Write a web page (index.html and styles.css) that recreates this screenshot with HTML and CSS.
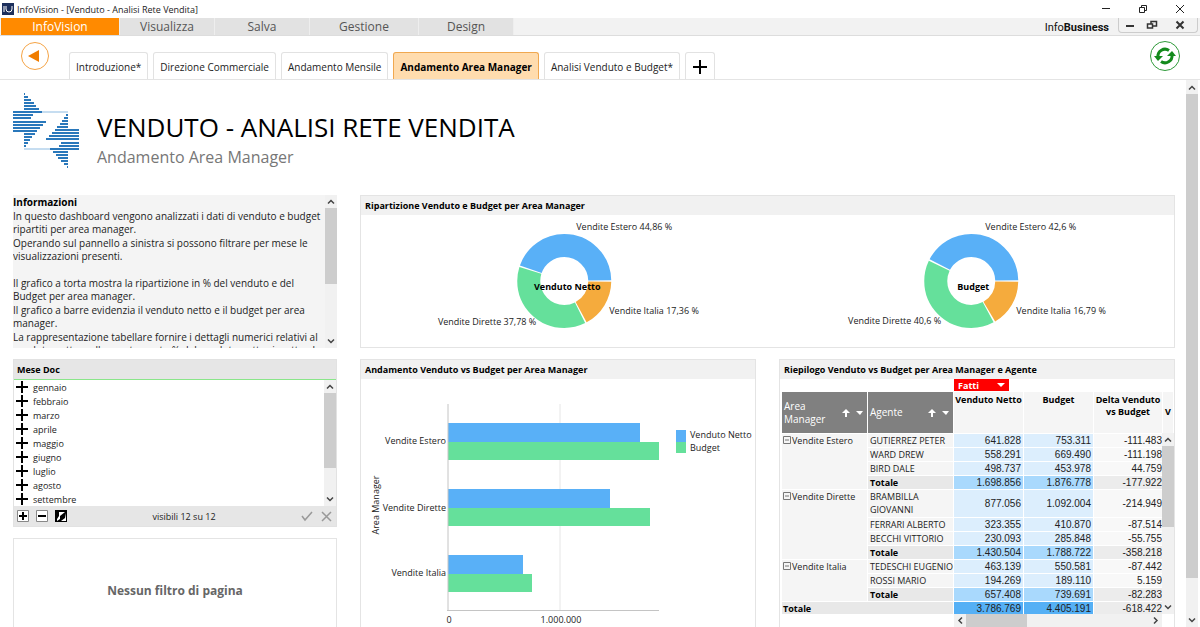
FILE: index.html
```html
<!DOCTYPE html>
<html lang="it">
	<head>
		<meta charset="utf-8" />
		<title>InfoVision - [Venduto - Analisi Rete Vendita]</title>
		<link rel="stylesheet" href="styles.css">
	</head>
	<body>
		<svg width="0" height="0" class="symbols">
			<symbol id="plus" viewBox="0 0 12 12"><path d="M6 0v12M0 6h12" stroke="#000" stroke-width="2" /></symbol>
			<symbol id="up" viewBox="0 0 12 12"><path d="M3 8l3-3 3 3" fill="none" stroke="#444" stroke-width="1.500" /></symbol>
			<symbol id="down" viewBox="0 0 12 12"><path d="M3 4l3 3 3-3" fill="none" stroke="#444" stroke-width="1.500" /></symbol>
			<symbol id="left" viewBox="0 0 12 12"><path d="M8 3L5 6l3 3" fill="none" stroke="#444" stroke-width="1.500" /></symbol>
			<symbol id="right" viewBox="0 0 12 12"><path d="M4 3l3 3-3 3" fill="none" stroke="#444" stroke-width="1.500" /></symbol>
			<symbol id="sort" viewBox="0 0 24 10"><path d="M5 1l4 4H6v4H4V5H1z" fill="#fff" /><path d="M15 3h7l-3 4z" fill="#fff" /></symbol>
			<symbol id="minus-box" viewBox="0 0 8 8"><path d="M.5.5h7v7h-7zM2 4h4" fill="none" stroke="#777" /></symbol>
		</svg>

		<header class="titlebar">
			<svg class="app-icon" viewBox="0 0 12 12"><path d="M0 0h12v12H0z" fill="#1c2f5c" /><path d="M2 3v6M4 3v3q0 3 3 3 3 0 3-3V3" fill="none" stroke="#fff" /></svg>
			<span class="window-title">InfoVision - [Venduto - Analisi Rete Vendita]</span>
			<div class="window-controls">
				<button aria-label="Riduci"><svg viewBox="0 0 10 10"><path d="M1 4.5h8" stroke="#222" /></svg></button>
				<button aria-label="Ripristina"><svg viewBox="0 0 10 10"><path d="M1.500 3.500h5v5h-5zM3.500 3V1.500h5v5H7" fill="none" stroke="#222" /></svg></button>
				<button aria-label="Chiudi"><svg viewBox="0 0 10 10"><path d="M1 1l8 8M9 1L1 9" stroke="#222" /></svg></button>
			</div>
		</header>

		<nav class="menu">
			<button class="menu-item active">InfoVision</button>
			<button class="menu-item">Visualizza</button>
			<button class="menu-item">Salva</button>
			<button class="menu-item wide">Gestione</button>
			<button class="menu-item">Design</button>
			<span class="brand">Info<b>Business</b></span>
			<div class="mdi-controls">
				<button aria-label="Riduci scheda"><svg viewBox="0 0 12 10"><path d="M2 6h8" stroke="#333" stroke-width="2" /></svg></button>
				<button aria-label="Ripristina scheda"><svg viewBox="0 0 12 10"><path d="M1.500 4h5v4h-5zM5 4V1.500h5.500V6H7" fill="none" stroke="#333" stroke-width="1.500" /></svg></button>
				<button aria-label="Chiudi scheda"><svg viewBox="0 0 12 10"><path d="M2.500 1.500l7 7M9.500 1.500l-7 7" stroke="#333" stroke-width="2" /></svg></button>
			</div>
		</nav>

		<div class="tabbar">
			<button class="round-button" aria-label="Indietro">
				<svg viewBox="0 0 30 30"><circle cx="15" cy="15" r="13.500" fill="none" stroke="#f5a344" /><path d="M19 9v12L8 15z" fill="#f07d00" /></svg>
			</button>
			<nav class="tabs">
				<button class="tab">Introduzione*</button>
				<button class="tab">Direzione Commerciale</button>
				<button class="tab">Andamento Mensile</button>
				<button class="tab active">Andamento Area Manager</button>
				<button class="tab">Analisi Venduto e Budget*</button>
				<button class="tab add" aria-label="Aggiungi"><svg viewBox="0 0 16 16"><path d="M8 1v14M1 8h14" stroke="#000" stroke-width="2" /></svg></button>
			</nav>
			<button class="round-button" aria-label="Aggiorna">
				<svg viewBox="0 0 30 30">
					<circle cx="15" cy="15" r="14.500" fill="none" stroke="#2f9a3a" />
					<g id="half-arrow"><path d="M8 16a7 7 0 0 1 11-6.500" fill="none" stroke="#138a1c" stroke-width="3" /><path d="M4 15h9l-5 5z" fill="#138a1c" /></g>
					<use href="#half-arrow" transform="rotate(180 15 15)" />
				</svg>
			</button>
		</div>

		<div class="workspace">
			<main class="page">
				<div class="page-header">
					<svg class="logo" viewBox="0 0 66 76">
						<g id="stripes" fill="none">
							<path d="M11 1h1M11 4h4M11 7h7M11 10h10M11 13h12M11 16h15M0 19h29M0 22h20M0 25h18M0 29h33M0 32h30M0 35h27M0 38h24M11 41h11M11 44h8M11 47h6M11 50h4M11 53h2" stroke="#2a78bb" stroke-width="2" />
							<path d="M29 19h26" stroke="#8dbbe2" />
						</g>
						<use href="#stripes" transform="rotate(180 33 37.500)" />
					</svg>
					<div>
						<h1>VENDUTO - ANALISI RETE VENDITA</h1>
						<h2>Andamento Area Manager</h2>
					</div>
				</div>

				<div class="dashboard">
					<section class="info">
						<div class="info-text">
							<p><b>Informazioni</b></p>
							<p>
								In questo dashboard vengono analizzati i dati di venduto e budget<br />
								ripartiti per area manager.
							</p>
							<p>
								Operando sul pannello a sinistra si possono filtrare per mese le<br />
								visualizzazioni presenti.
							</p>
							<br />
							<p>
								Il grafico a torta mostra la ripartizione in % del venduto e del<br />
								Budget per area manager.
							</p>
							<p>
								Il grafico a barre evidenzia il venduto netto e il budget per area<br />
								manager.
							</p>
							<p>
								La rappresentazione tabellare fornire i dettagli numerici relativi al<br />
								venduto netto e allo scostamento % del venduto netto rispetto al
							</p>
						</div>
						<div class="scrollbar">
							<svg><use href="#up" /></svg>
							<div class="track"><div class="thumb long"></div></div>
							<svg><use href="#down" /></svg>
						</div>
					</section>

					<section class="panel donuts">
						<h3>Ripartizione Venduto e Budget per Area Manager</h3>
						<div class="donut-row">
							<svg viewBox="0 0 406 132">
								<g class="ring" transform="translate(203 66)">
									<circle r="35.500" pathLength="100" stroke="#f5ab3d" stroke-dasharray="16.800 100" stroke-dashoffset="-.3" />
									<circle r="35.500" pathLength="100" stroke="#65e09b" stroke-dasharray="37.200 100" stroke-dashoffset="-17.650" />
									<circle r="35.500" pathLength="100" stroke="#59b0f7" stroke-dasharray="44.300 100" stroke-dashoffset="-55.400" />
								</g>
								<text x="215" y="15">Vendite Estero 44,86 %</text>
								<text x="248" y="99">Vendite Italia 17,36 %</text>
								<text x="175" y="110" class="end">Vendite Dirette 37,78 %</text>
								<text x="206" y="75" class="hub">Venduto Netto</text>
							</svg>
							<svg viewBox="0 0 406 132">
								<g class="ring" transform="translate(203 66)">
									<circle r="35.500" pathLength="100" stroke="#f5ab3d" stroke-dasharray="16.200 100" stroke-dashoffset="-.3" />
									<circle r="35.500" pathLength="100" stroke="#65e09b" stroke-dasharray="40 100" stroke-dashoffset="-17.100" />
									<circle r="35.500" pathLength="100" stroke="#59b0f7" stroke-dasharray="42 100" stroke-dashoffset="-57.700" />
								</g>
								<text x="217" y="15">Vendite Estero 42,6 %</text>
								<text x="248" y="99">Vendite Italia 16,79 %</text>
								<text x="173" y="109" class="end">Vendite Dirette 40,6 %</text>
								<text x="205" y="75" class="hub">Budget</text>
							</svg>
						</div>
					</section>

					<div class="side">
						<section class="filter">
							<h3>Mese Doc</h3>
							<div class="filter-body">
								<ul class="months">
									<li><svg><use href="#plus" /></svg>gennaio</li>
									<li><svg><use href="#plus" /></svg>febbraio</li>
									<li><svg><use href="#plus" /></svg>marzo</li>
									<li><svg><use href="#plus" /></svg>aprile</li>
									<li><svg><use href="#plus" /></svg>maggio</li>
									<li><svg><use href="#plus" /></svg>giugno</li>
									<li><svg><use href="#plus" /></svg>luglio</li>
									<li><svg><use href="#plus" /></svg>agosto</li>
									<li><svg><use href="#plus" /></svg>settembre</li>
								</ul>
								<div class="scrollbar">
									<svg><use href="#up" /></svg>
									<div class="track"><div class="thumb wide"></div></div>
									<svg><use href="#down" /></svg>
								</div>
							</div>
							<div class="filter-footer">
								<div class="tools">
									<button aria-label="Seleziona tutto"><svg viewBox="0 0 12 12"><path d="M.5.5h11v11H.5z" fill="#fff" stroke="#888" /><path d="M6 2v8M2 6h8" stroke="#000" stroke-width="2" /></svg></button>
									<button aria-label="Deseleziona tutto"><svg viewBox="0 0 12 12"><path d="M.5.5h11v11H.5z" fill="#fff" stroke="#888" /><path d="M2 6h8" stroke="#000" stroke-width="2" /></svg></button>
									<button aria-label="Inverti"><svg viewBox="0 0 12 12"><path d="M0 0h12v12H0z" /><path d="M4 2h6L5 6v3L2 11V9l2-3zM11 3v8H6l4-3z" fill="#fff" /></svg></button>
								</div>
								<span>visibili 12 su 12</span>
								<div class="tools">
									<button aria-label="Applica"><svg viewBox="0 0 12 12"><path d="M1 6l3 4 7-8" fill="none" stroke="#999" stroke-width="1.500" /></svg></button>
									<button aria-label="Annulla"><svg viewBox="0 0 12 12"><path d="M2 2l9 9M11 2l-9 9" stroke="#999" stroke-width="1.500" /></svg></button>
								</div>
							</div>
						</section>
						<section class="page-filter">Nessun filtro di pagina</section>
					</div>

					<section class="panel">
						<h3>Andamento Venduto vs Budget per Area Manager</h3>
						<svg class="bars" viewBox="0 0 394 248">
							<path d="M199 25v206" stroke="#e6e6e6" />
							<g fill="#59b0f7">
								<rect x="87" y="44" width="192" height="19" />
								<rect x="87" y="110" width="162" height="19" />
								<rect x="87" y="176" width="75" height="19" />
								<rect x="315" y="51" width="10" height="12" />
							</g>
							<g fill="#65e09b">
								<rect x="87" y="63" width="211" height="18" />
								<rect x="87" y="129" width="202" height="18" />
								<rect x="87" y="195" width="84" height="18" />
								<rect x="315" y="63" width="10" height="11" />
							</g>
							<path d="M87 25v207M86 231.500h212" fill="none" stroke="#c4c4c4" />
							<text x="85" y="65" class="end">Vendite Estero</text>
							<text x="85" y="132" class="end">Vendite Dirette</text>
							<text x="85" y="197" class="end">Vendite Italia</text>
							<text x="329" y="59">Venduto Netto</text>
							<text x="329" y="72">Budget</text>
							<text x="88" y="244" class="mid">0</text>
							<text x="200" y="244" class="mid">1.000.000</text>
							<text transform="translate(18 126) rotate(-90)" class="mid">Area Manager</text>
						</svg>
					</section>

					<section class="panel pivot">
						<h3>Riepilogo Venduto vs Budget per Area Manager e Agente</h3>
						<div class="facts">
							<select aria-label="Fatti"><option>Fatti</option></select>
							<svg viewBox="0 0 8 5"><path d="M0 0h8L4 4z" fill="#fff" /></svg>
						</div>
						<div class="pivot-view">
							<table>
								<colgroup>
									<col class="c-area"><col class="c-agent"><col class="c-net"><col class="c-budget"><col class="c-delta"><col>
								</colgroup>
								<thead>
									<tr>
										<th class="dim"><span>Area Manager<svg><use href="#sort" /></svg></span></th>
										<th class="dim"><span>Agente<svg><use href="#sort" /></svg></span></th>
										<th>Venduto Netto</th>
										<th>Budget</th>
										<th>Delta Venduto<br />vs Budget</th>
										<th><br />V</th>
									</tr>
								</thead>
								<tbody>
									<tr><th rowspan="4"><svg><use href="#minus-box" /></svg>Vendite Estero</th><td>GUTIERREZ PETER</td><td>641.828</td><td>753.311</td><td>-111.483</td><td></td></tr>
									<tr><td>WARD DREW</td><td>558.291</td><td>669.490</td><td>-111.198</td><td></td></tr>
									<tr><td>BIRD DALE</td><td>498.737</td><td>453.978</td><td>44.759</td><td></td></tr>
									<tr class="total"><td>Totale</td><td>1.698.856</td><td>1.876.778</td><td>-177.922</td><td></td></tr>
									<tr class="double"><th rowspan="4"><svg><use href="#minus-box" /></svg>Vendite Dirette</th><td>BRAMBILLA<br />GIOVANNI</td><td>877.056</td><td>1.092.004</td><td>-214.949</td><td></td></tr>
									<tr><td>FERRARI ALBERTO</td><td>323.355</td><td>410.870</td><td>-87.514</td><td></td></tr>
									<tr><td>BECCHI VITTORIO</td><td>230.093</td><td>285.848</td><td>-55.755</td><td></td></tr>
									<tr class="total"><td>Totale</td><td>1.430.504</td><td>1.788.722</td><td>-358.218</td><td></td></tr>
									<tr><th rowspan="3"><svg><use href="#minus-box" /></svg>Vendite Italia</th><td>TEDESCHI EUGENIO</td><td>463.139</td><td>550.581</td><td>-87.442</td><td></td></tr>
									<tr><td>ROSSI MARIO</td><td>194.269</td><td>189.110</td><td>5.159</td><td></td></tr>
									<tr class="total"><td>Totale</td><td>657.408</td><td>739.691</td><td>-82.283</td><td></td></tr>
									<tr class="grand"><th colspan="2">Totale</th><td>3.786.769</td><td>4.405.191</td><td>-618.422</td><td></td></tr>
								</tbody>
							</table>
							<div class="scrollbar over">
								<svg><use href="#up" /></svg>
								<div class="track"><div class="thumb half"></div></div>
								<svg><use href="#down" /></svg>
							</div>
						</div>
						<div class="scrollbar horizontal">
							<svg><use href="#left" /></svg>
							<div class="track"><div class="thumb"></div></div>
							<svg><use href="#right" /></svg>
						</div>
					</section>
				</div>
			</main>
			<div class="scrollbar page-scroll">
				<svg><use href="#up" /></svg>
				<div class="track"><div class="thumb"></div></div>
				<svg><use href="#down" /></svg>
			</div>
		</div>
	</body>
</html>
```
FILE: styles.css
```css
* {
	margin: 0;
	padding: 0;
	box-sizing: border-box;
}

body {
	height: 100vh;
	display: flex;
	flex-direction: column;
	overflow: hidden;
	background: #fff;
	color: #222;
	font-family: "Open Sans", "Noto Sans", sans-serif;
	font-size: 9px;
}

button {
	border: none;
	background: none;
	font: inherit;
	color: inherit;
}

svg {
	display: block;
	flex: none;
}

.symbols {
	position: absolute;
}

/* Window title and menu */
.titlebar {
	display: flex;
	align-items: center;
	height: 18px;
	padding: 0 15px 0 2px;
	gap: 3px;
}

.app-icon {
	width: 12px;
	height: 12px;
}

.window-title {
	flex: 1;
}

.window-controls {
	display: flex;
	gap: 27px;
}

.window-controls svg {
	width: 10px;
	height: 10px;
}

.menu {
	display: flex;
	height: 18px;
	padding-left: 1px;
	background: #f2f2f2;
	border-bottom: 1px solid #ddd;
}

.menu-item {
	width: 95px;
	background: #e2e2e2;
	border-right: 1px solid #eee;
	font-size: 12px;
	line-height: 17px;
	color: #555;
}

.menu-item.wide {
	width: 109px;
}

.menu-item.active {
	width: 119px;
	background: #ff8a00;
	color: #fff;
}

.brand {
	margin-left: auto;
	margin-right: 9px;
	font-family: Roboto, sans-serif;
	font-size: 11px;
	line-height: 19px;
	color: #111;
}

.mdi-controls {
	display: flex;
	align-items: center;
	gap: 10px;
	width: 80px;
	height: 15px;
	margin-right: 2px;
	padding-left: 5px;
	border: 1px solid #ccc;
	border-top: none;
	border-radius: 0 0 4px 4px;
}

.mdi-controls svg {
	width: 12px;
	height: 10px;
}

.mdi-controls button:last-child {
	margin-left: 6px;
}

/* Dashboard tabs */
.tabbar {
	display: flex;
	height: 44px;
	padding: 5px 20px 0;
	border-bottom: 1px solid #e4e4e4;
}

.round-button,
.round-button svg {
	width: 30px;
	height: 30px;
}

.tabs {
	display: flex;
	flex: 1;
	align-items: flex-end;
	gap: 5px;
	padding-left: 19px;
}

.tab {
	height: 27px;
	padding: 1px 6px 0;
	border: 1px solid #e2e2e2;
	border-bottom: none;
	border-radius: 3px 3px 0 0;
	font-size: 10px;
}

.tab.active {
	background: #ffdcae;
	border-color: #f0a850;
	color: #000;
	font-weight: 700;
}

.tab.add svg {
	width: 16px;
	height: 16px;
}

/* Page */
.workspace {
	display: flex;
	flex: 1;
	min-height: 0;
	padding-right: 2px;
}

.page {
	display: flex;
	flex-direction: column;
	flex: 1;
	min-width: 0;
	padding: 13px 11px 0 13px;
}

.page-header {
	display: flex;
	gap: 18px;
	height: 102px;
}

.logo {
	width: 66px;
	height: 76px;
}

h1 {
	margin-top: 17px;
	font-size: 26px;
	line-height: 34px;
	font-weight: 400;
	color: #000;
}

h2 {
	font-size: 16px;
	line-height: 26px;
	font-weight: 400;
	color: #777;
}

.dashboard {
	display: grid;
	grid-template-columns: 324fr 396fr 396fr;
	grid-template-rows: 153px minmax(0, 1fr);
	gap: 11px 23px;
	flex: 1;
	min-height: 0;
}

h3 {
	font-size: 9px;
	line-height: 19px;
	font-weight: 700;
	color: #000;
}

.panel {
	display: flex;
	flex-direction: column;
	min-width: 0;
	border: 1px solid #e4e4e4;
	border-bottom: none;
}

.panel h3 {
	padding-left: 4px;
	background: #f1f1f1;
}

/* Information box */
.info {
	display: flex;
	min-width: 0;
	background: #f4f4f4;
}

.info-text {
	flex: 1;
	overflow: hidden;
	white-space: nowrap;
	font-size: 10px;
	line-height: 13px;
	padding-top: 1px;
}

.info-text p {
	margin-bottom: 1px;
}

.info-text b {
	color: #000;
}

/* Scrollbars */
.scrollbar {
	display: flex;
	flex-direction: column;
	width: 12px;
	background: #f1f1f1;
}

.scrollbar svg {
	width: 12px;
	height: 13px;
}

.track {
	flex: 1;
}

.thumb {
	height: 93%;
	background: #cdcdcd;
}

.thumb.long {
	height: 60%;
}

.thumb.wide {
	height: 75%;
}

.thumb.half {
	height: 52%;
}

.scrollbar.horizontal {
	flex-direction: row;
	width: auto;
	height: 13px;
	margin-left: 174px;
	margin-right: 12px;
}

.horizontal .thumb {
	width: 33%;
	height: 100%;
}

.scrollbar.over {
	position: absolute;
	top: 41px;
	right: 0;
	bottom: 0;
}

.page-scroll {
	padding-top: 1px;
}

/* Charts */
.donuts {
	grid-column: span 2;
	border-bottom: 1px solid #e4e4e4;
}

.donut-row {
	display: flex;
}

.donut-row svg {
	flex: 1;
	min-width: 0;
	height: 132px;
}

.ring circle {
	fill: none;
	stroke-width: 23;
}

.panel text {
	font-size: 9px;
	fill: #222;
}

.panel text.hub {
	font-weight: 700;
	text-anchor: middle;
	fill: #000;
}

.panel text.end {
	text-anchor: end;
}

.panel text.mid {
	text-anchor: middle;
}

.bars {
	width: 100%;
	height: 248px;
}

/* Filters */
.side {
	display: flex;
	flex-direction: column;
	gap: 11px;
	min-height: 0;
}

.filter {
	border: 1px solid #e2e2e2;
}

.filter h3 {
	padding-left: 3px;
	background: #e6e6e6;
	border-bottom: 1px solid #8ae68a;
}

.filter-body {
	display: flex;
}

.months {
	flex: 1;
	list-style: none;
}

.months li {
	display: flex;
	align-items: center;
	gap: 5px;
	height: 14px;
	padding-left: 2px;
}

.months svg {
	width: 12px;
	height: 12px;
}

.filter-footer {
	display: flex;
	align-items: center;
	justify-content: space-between;
	height: 20px;
	padding: 0 4px 0 3px;
	background: #e6e6e6;
}

.tools {
	display: flex;
	gap: 7px;
}

.tools svg {
	width: 12px;
	height: 12px;
}

.page-filter {
	flex: 1;
	padding-top: 43px;
	border: 1px solid #e4e4e4;
	border-bottom: none;
	text-align: center;
	font-size: 12px;
	font-weight: 700;
	color: #666;
}

/* Pivot table */
.facts {
	display: flex;
	align-items: center;
	width: 55px;
	height: 12px;
	margin: 0 0 1px 174px;
	padding: 0 4px;
	background: #f00;
}

.facts select {
	flex: 1;
	min-width: 0;
	appearance: none;
	border: none;
	background: none;
	color: #fff;
	font: inherit;
	font-weight: 700;
}

.facts svg {
	width: 8px;
	height: 5px;
}

.pivot-view {
	position: relative;
	flex: 1;
	min-height: 0;
	padding-left: 2px;
	overflow: hidden;
}

table {
	width: 100%;
	table-layout: fixed;
	border-collapse: separate;
	border-spacing: 0;
}

.c-area,
.c-agent {
	width: 86px;
}

.c-net,
.c-budget {
	width: 70px;
}

.c-delta {
	width: 69px;
}

th,
td {
	height: 14px;
	padding: 0 2px;
	border-right: 1px solid #fff;
	border-bottom: 1px solid #fff;
	line-height: 13px;
	text-align: left;
	vertical-align: top;
	font-weight: 400;
	white-space: nowrap;
	background: #f5f5f5;
}

th svg {
	display: inline-block;
	width: 8px;
	height: 8px;
	margin-right: 1px;
}

thead th {
	height: 42px;
	padding: 2px 0 0;
	text-align: center;
	font-weight: 700;
	line-height: 12px;
	color: #000;
}

thead th.dim {
	padding: 0 2px;
	background: #808080;
	color: #fff;
	font-size: 10px;
	line-height: 13px;
	font-weight: 400;
	text-align: left;
	vertical-align: middle;
	white-space: normal;
}

.dim span {
	display: flex;
	align-items: center;
	justify-content: space-between;
}

.dim svg {
	width: 24px;
	height: 10px;
	margin: 0;
}

tbody th {
	padding-left: 1px;
}

.double td {
	height: 28px;
}

tbody td:nth-last-child(-n + 4) {
	background: #dceefd;
	font-family: "Liberation Sans", Arial, sans-serif;
	font-size: 10px;
	text-align: right;
	vertical-align: middle;
}

tbody td:nth-last-child(-n + 2) {
	background: #f8f8f8;
	padding-right: 0;
}

.total td {
	background: #e8e8e8;
}

.total td:nth-last-child(5) {
	color: #000;
	font-weight: 700;
}

.total td:nth-last-child(4),
.total td:nth-last-child(3) {
	background: #a9d9fd;
}

.total td:nth-last-child(-n + 2),
.grand td:nth-last-child(-n + 2) {
	background: #ececec;
}

.grand th {
	background: #e8e8e8;
	color: #000;
	font-weight: 700;
}

.grand td:nth-last-child(4),
.grand td:nth-last-child(3) {
	background: #55b0f5;
}
```
